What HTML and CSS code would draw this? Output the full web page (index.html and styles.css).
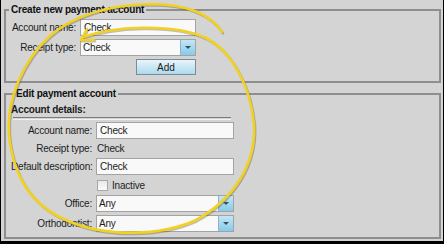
FILE: index.html
```html
<html>
<head>
    <title>Payment accounts</title>
    <link rel="stylesheet" href="styles.css">
</head>
<body>
<div class="window">
    <fieldset class="group create">
        <legend>Create new payment account</legend>
        <div class="form">
            <label>Account name:</label>
            <input class="field" value="Check">
            <label>Receipt type:</label>
            <div class="combo"><span>Check</span><i class="drop"></i></div>
            <span></span>
            <div class="actions"><button class="btn">Add</button></div>
        </div>
    </fieldset>

    <fieldset class="group edit">
        <legend>Edit payment account</legend>
        <div class="subhead">Account details:</div>
        <div class="rule"></div>
        <div class="form wide">
            <label>Account name:</label>
            <input class="field" value="Check">
            <label class="plain">Receipt type:</label>
            <span class="plain value">Check</span>
            <label>Default description:</label>
            <input class="field" value="Check">
            <span></span>
            <label class="check"><i class="box"></i>Inactive</label>
            <label>Office:</label>
            <div class="combo"><span>Any</span><i class="drop"></i></div>
            <label>Orthodontist:</label>
            <div class="combo"><span>Any</span><i class="drop"></i></div>
        </div>
    </fieldset>

    <!-- hand drawn highlight on top of the form -->
    <svg class="markup" width="444" height="244" viewBox="0 0 444 244">
        <g class="shade" transform="translate(1 1.2)">
            <path d="M82 37 C110 27 170 22 205 38 C232 52 250 88 253 125 C255 165 232 200 195 220 C160 236 105 238 65 220 C30 205 12 175 8 135 C5 100 22 60 50 35 C75 14 110 5 150 4 C185 4 210 14 221 32"/>
            <path d="M80 40 L86 29 M80 40 L93 40"/>
        </g>
        <g class="pen">
            <path d="M82 37 C110 27 170 22 205 38 C232 52 250 88 253 125 C255 165 232 200 195 220 C160 236 105 238 65 220 C30 205 12 175 8 135 C5 100 22 60 50 35 C75 14 110 5 150 4 C185 4 210 14 221 32"/>
            <path d="M80 40 L86 29 M80 40 L93 40"/>
        </g>
    </svg>
</div>
</body>
</html>
```

FILE: styles.css
```css
body{
    margin: 0;
    background-color: #d4d4d4;
}

.window{
    position: relative;
    box-sizing: border-box;
    width: 444px;
    height: 244px;
    padding: 3px 2px 0 3px;
    background-color: #d4d4d4;
    border-left: 1px solid #000;
    border-right: 1px solid #000;
    border-bottom: 3px solid #000;
    font-family: "Liberation Sans", Arial, sans-serif;
    font-size: 10px;
    letter-spacing: -0.2px;
    color: #1c1c1c;
}

.group{
    margin: 0;
    padding: 0 5px;
    border: 2px solid #8e8e8e;
}

.group legend{
    margin-left: 3px;
    padding: 0 2px;
    font-weight: bold;
    font-size: 10px;
    line-height: 13px;
    color: #111;
}

.create{
    padding: 3px 0 6px 0;
}

.edit{
    margin-top: 4px;
    padding: 2px 0 5px 5px;
}

.form{
    display: grid;
    grid-template-columns: 70px 116px;
    column-gap: 4px;
    row-gap: 3px;
    align-items: center;
}

.form.wide{
    grid-template-columns: 81px 138px;
}

.form label{
    text-align: right;
    white-space: nowrap;
}

.field{
    box-sizing: border-box;
    height: 17px;
    margin: 0;
    padding: 0 3px;
    border: 1px solid #a3a3a3;
    background-color: #f9f9f9;
    font-family: inherit;
    font-size: 10px;
    letter-spacing: -0.2px;
    color: #1c1c1c;
    outline: none;
}

.combo{
    box-sizing: border-box;
    display: flex;
    height: 17px;
    border: 1px solid #a3a3a3;
    background-color: #f9f9f9;
}

.combo span{
    flex: 1;
    padding-left: 2px;
    line-height: 15px;
}

.drop{
    position: relative;
    width: 14px;
    border-left: 1px solid #8fb3c6;
    background: linear-gradient(#c3e6f6, #86cbea);
}

.drop::after{
    content: "";
    position: absolute;
    left: 4px;
    top: 6px;
    border-left: 3px solid transparent;
    border-right: 3px solid transparent;
    border-top: 3px solid #3d4d5c;
}

.actions{
    display: flex;
    justify-content: flex-end;
}

.btn{
    box-sizing: border-box;
    width: 60px;
    height: 16px;
    padding: 0;
    border: 1px solid #7d8b93;
    background: linear-gradient(#e8f5fb, #aedaee);
    font-family: inherit;
    font-size: 10px;
    color: #1c1c1c;
}

.subhead{
    font-weight: bold;
    line-height: 13px;
    margin-top: 1px;
}

.rule{
    width: 218px;
    height: 1px;
    margin: 1px 0 2px 2px;
    border-top: 1px solid #7b7b7b;
    border-bottom: 1px solid #f2f2f2;
}

.plain{
    line-height: 13px;
}

.value{
    padding-left: 1px;
}

.form .check{
    display: flex;
    align-items: center;
    text-align: left;
    height: 14px;
}

.box{
    box-sizing: border-box;
    width: 11px;
    height: 11px;
    margin: 0 4px 0 1px;
    border: 1px solid #a8a8a8;
    background: linear-gradient(#e9e9e9, #fbfbfb);
}

.markup{
    position: absolute;
    left: 0;
    top: 0;
    pointer-events: none;
}

.markup path{
    fill: none;
    stroke-width: 2.6;
    stroke-linecap: round;
    stroke-linejoin: round;
}

.shade path{
    stroke: rgba(90, 80, 40, 0.35);
}

.pen path{
    stroke: #f2d125;
}
```
